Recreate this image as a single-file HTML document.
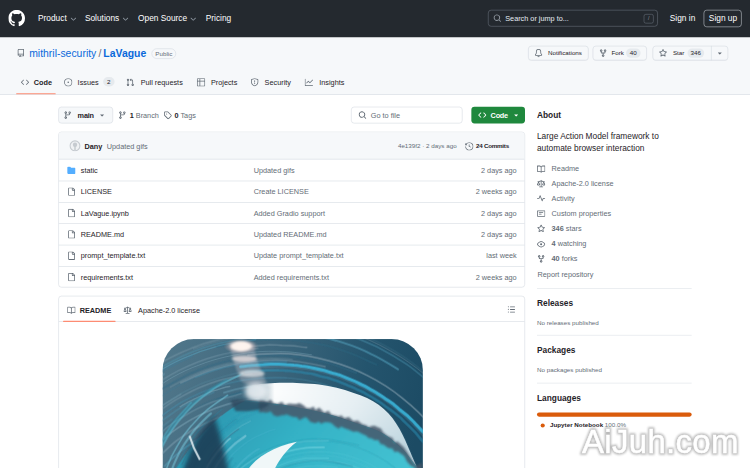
<!DOCTYPE html>
<html><head><meta charset="utf-8">
<style>
*{box-sizing:border-box;margin:0;padding:0}
html,body{width:750px;height:468px;overflow:hidden;background:#fff}
body{font-family:"Liberation Sans",sans-serif;color:#1f2328}
#stage{position:absolute;left:0;top:0;width:1440px;height:899px;transform:scale(0.5208333);transform-origin:0 0;overflow:hidden;background:#fff}
.a{position:absolute;white-space:nowrap}
svg{display:block}
#hdr{position:absolute;left:0;top:0;width:1440px;height:71.5px;background:#24292f}
.nav{top:24px;font-size:16px;color:#fff;line-height:22px}
#rh{position:absolute;left:0;top:71.5px;width:1440px;height:110.5px;background:#f6f8fa;border-bottom:1px solid #d0d7de}
.btn{position:absolute;height:28px;border:1px solid #d0d7de;border-radius:6px;background:#f6f8fa;box-shadow:0 1px 0 rgba(31,35,40,.04)}
.bt{top:21.5px;font-size:12px;line-height:18px;color:#1f2328}
.cnt{position:absolute;top:21.5px;height:18px;border-radius:9px;background:#e6eaee;font-size:12px;font-weight:normal;line-height:18px;text-align:center;color:#1f2328}
.tab{top:147.5px;font-size:14px;line-height:21px;color:#1f2328}
.t14{font-size:14px;line-height:20px;color:#1f2328}
.h2{position:absolute;left:1031px;font-size:16px;font-weight:bold;line-height:24px;color:#1f2328}
.div{position:absolute;left:1031px;width:297px;height:1px;background:#d8dee4}
#wm,#wm2{position:absolute;left:582px;top:423px;font-size:33px;letter-spacing:0.3px;line-height:38px;font-family:"Liberation Sans",sans-serif;white-space:nowrap}
#wm{color:#bbb;-webkit-text-stroke:3.4px #bbb;filter:blur(1.1px)}
#wm2{color:#fff;-webkit-text-stroke:0.5px #fff}
</style></head><body>
<div id="stage">
<div id="hdr">
<svg class="a" style="left:16px;top:19px" width="32" height="32" viewBox="0 0 16 16"><path fill="#fff" d="M8 0c4.42 0 8 3.58 8 8a8.013 8.013 0 0 1-5.45 7.59c-.4.08-.55-.17-.55-.38 0-.27.01-1.130.01-2.2 0-.75-.25-1.23-.54-1.48 1.78-.2 3.65-.88 3.65-3.95 0-.88-.31-1.59-.82-2.15.08-.2.36-1.02-.08-2.12 0 0-.67-.22-2.2.82-.64-.18-1.32-.27-2-.27-.68 0-1.36.09-2 .27-1.53-1.03-2.2-.82-2.2-.82-.44 1.1-.16 1.92-.08 2.12-.51.56-.82 1.28-.82 2.15 0 3.06 1.86 3.75 3.64 3.95-.23.2-.44.55-.51 1.07-.46.21-1.61.55-2.33-.66-.15-.24-.6-.83-1.230-.82-.67.01-.27.38.01.53.34.19.73.9.82 1.13.16.45.68 1.31 2.69.94 0 .67.01 1.3.01 1.49 0 .21-.15.45-.55.38A7.995 7.995 0 0 1 0 8c0-4.42 3.58-8 8-8Z"/></svg>
<div class="a nav" style="left:73px">Product</div>
<div class="a nav" style="left:163px">Solutions</div>
<div class="a nav" style="left:265px">Open Source</div>
<div class="a nav" style="left:395px">Pricing</div>
<svg class="a" style="left:133px;top:29px" width="16" height="16" viewBox="0 0 16 16"><path fill="#8c959f" d="M12.78 5.22a.749.749 0 0 1 0 1.06l-4.25 4.25a.749.749 0 0 1-1.06 0L3.22 6.28a.749.749 0 1 1 1.06-1.06L8 8.939l3.72-3.719a.749.749 0 0 1 1.06 0Z"/></svg>
<svg class="a" style="left:233px;top:29px" width="16" height="16" viewBox="0 0 16 16"><path fill="#8c959f" d="M12.78 5.22a.749.749 0 0 1 0 1.06l-4.25 4.25a.749.749 0 0 1-1.06 0L3.22 6.28a.749.749 0 1 1 1.06-1.06L8 8.939l3.72-3.719a.749.749 0 0 1 1.06 0Z"/></svg>
<svg class="a" style="left:363px;top:29px" width="16" height="16" viewBox="0 0 16 16"><path fill="#8c959f" d="M12.78 5.22a.749.749 0 0 1 0 1.06l-4.25 4.25a.749.749 0 0 1-1.06 0L3.22 6.28a.749.749 0 1 1 1.06-1.06L8 8.939l3.72-3.719a.749.749 0 0 1 1.06 0Z"/></svg>
<div class="a" style="left:937px;top:19px;width:326px;height:32px;border:1px solid #6e7681;border-radius:6px"></div>
<svg class="a" style="left:947px;top:27px" width="16" height="16" viewBox="0 0 16 16"><path fill="#9198a1" d="M10.68 11.74a6 6 0 0 1-7.922-8.982 6 6 0 0 1 8.982 7.922l3.04 3.04a.749.749 0 0 1-.326 1.275.749.749 0 0 1-.734-.215ZM11.5 7a4.499 4.499 0 1 0-8.997 0A4.499 4.499 0 0 0 11.5 7Z"/></svg>
<div class="a nav" style="left:970px;top:25px;font-size:14px;line-height:20px;color:#e6edf3">Search or jump to...</div>
<div class="a" style="left:1236px;top:27px;width:19px;height:18px;border:1px solid #6e7681;border-radius:4px;font-size:10px;line-height:16px;text-align:center;color:#9198a1">/</div>
<div class="a nav" style="left:1286px">Sign in</div>
<div class="a" style="left:1351px;top:19px;width:73px;height:33px;border:1px solid #d0d7de;border-radius:6px"></div>
<div class="a nav" style="left:1361px">Sign up</div>
</div>
<div id="rh">
<svg class="a" style="left:32px;top:22.5px" width="16" height="16" viewBox="0 0 16 16"><path fill="#636c76" d="M2 2.5A2.5 2.5 0 0 1 4.5 0h8.75a.75.75 0 0 1 .75.75v12.5a.75.75 0 0 1-.75.75h-2.5a.75.75 0 0 1 0-1.5h1.75v-2h-8a1 1 0 0 0-.714 1.7.75.75 0 1 1-1.072 1.05A2.495 2.495 0 0 1 2 11.5Zm10.5-1h-8a1 1 0 0 0-1 1v6.708A2.486 2.486 0 0 1 4.5 9h8ZM5 12.25a.25.25 0 0 1 .25-.25h3.5a.25.25 0 0 1 .25.25v3.25a.25.25 0 0 1-.4.2l-1.45-1.087a.249.249 0 0 0-.3 0L5.4 15.7a.25.25 0 0 1-.4-.2Z"/></svg>
<div class="a" style="left:56px;top:16.5px;font-size:20px;line-height:30px;color:#0969da">mithril-security<span style="color:#636c76;margin:0 4px">/</span><b>LaVague</b></div>
<div class="a" style="left:291px;top:21.5px;width:47px;height:20px;border:1px solid #d0d7de;border-radius:10px;font-size:12px;line-height:18px;text-align:center;color:#636c76">Public</div>
<div class="btn" style="left:1014px;top:16.5px;width:116px"></div>
<svg class="a" style="left:1026px;top:22.5px" width="16" height="16" viewBox="0 0 16 16"><path fill="#636c76" d="M8 16a2 2 0 0 0 1.985-1.75c.017-.137-.097-.25-.235-.25h-3.5c-.138 0-.252.113-.235.25A2 2 0 0 0 8 16ZM3 5a5 5 0 0 1 10 0v2.947c0 .05.015.098.042.139l1.703 2.555A1.519 1.519 0 0 1 13.482 13H2.518a1.516 1.516 0 0 1-1.263-2.36l1.703-2.554A.255.255 0 0 0 3 7.947Zm5-3.5A3.5 3.5 0 0 0 4.5 5v2.947c0 .346-.102.683-.294.97l-1.703 2.556a.017.017 0 0 0-.003.01l.001.006c0 .002.002.004.004.006l.006.004.007.001h10.964l.007-.001.006-.004.004-.006.001-.007a.017.017 0 0 0-.003-.01l-1.703-2.554a1.745 1.745 0 0 1-.294-.97V5A3.5 3.5 0 0 0 8 1.5Z"/></svg>
<div class="a bt" style="left:1052px">Notifications</div>
<div class="btn" style="left:1138px;top:16.5px;width:104px"></div>
<svg class="a" style="left:1150px;top:22.5px" width="16" height="16" viewBox="0 0 16 16"><path fill="#636c76" d="M5 5.372v.878c0 .414.336.75.75.75h4.5a.75.75 0 0 0 .75-.75v-.878a2.25 2.25 0 1 1 1.5 0v.878a2.25 2.25 0 0 1-2.25 2.250h-1.5v2.128a2.251 2.251 0 1 1-1.5 0V8.5h-1.5A2.25 2.25 0 0 1 3.5 6.25v-.878a2.25 2.25 0 1 1 1.5 0ZM5 3.25a.75.75 0 1 0-1.5 0 .75.75 0 0 0 1.5 0Zm6.75.75a.75.75 0 1 0 0-1.5.75.75 0 0 0 0 1.5Zm-3 8.75a.75.75 0 1 0-1.5 0 .75.75 0 0 0 1.5 0Z"/></svg>
<div class="a bt" style="left:1174px">Fork</div>
<div class="cnt" style="left:1202px;width:28px">40</div>
<div class="btn" style="left:1253px;top:16.5px;width:145px"></div>
<div class="a" style="left:1365px;top:16.5px;width:1px;height:28px;background:#d0d7de"></div>
<svg class="a" style="left:1265px;top:22.5px" width="16" height="16" viewBox="0 0 16 16"><path fill="#636c76" d="M8 .25a.75.75 0 0 1 .673.418l1.882 3.815 4.21.612a.75.75 0 0 1 .416 1.279l-3.046 2.97.719 4.192a.751.751 0 0 1-1.088.791L8 12.347l-3.766 1.98a.75.75 0 0 1-1.088-.79l.72-4.194L.818 6.374a.75.75 0 0 1 .416-1.28l4.21-.611L7.327.668A.75.75 0 0 1 8 .25Zm0 2.445L6.615 5.5a.75.75 0 0 1-.564.41l-3.097.45 2.240 2.184a.75.75 0 0 1 .216.664l-.528 3.084 2.769-1.456a.75.75 0 0 1 .698 0l2.77 1.456-.53-3.084a.75.75 0 0 1 .216-.664l2.24-2.183-3.096-.45a.75.75 0 0 1-.564-.41L8 2.694Z"/></svg>
<div class="a bt" style="left:1292px">Star</div>
<div class="cnt" style="left:1320px;width:32px">346</div>
<svg class="a" style="left:1374px;top:22.5px" width="16" height="16" viewBox="0 0 16 16"><path fill="#636c76" d="m4.427 7.427 3.396 3.396a.25.25 0 0 0 .354 0l3.396-3.396A.25.25 0 0 0 11.396 7H4.604a.25.25 0 0 0-.177.427Z"/></svg>
</div>
<svg class="a" style="left:40px;top:150px" width="16" height="16" viewBox="0 0 16 16"><path fill="#636c76" d="m11.28 3.22 4.25 4.25a.75.75 0 0 1 0 1.06l-4.25 4.25a.749.749 0 0 1-1.275-.326.749.749 0 0 1 .215-.734L13.94 8l-3.72-3.72a.749.749 0 0 1 .326-1.275.749.749 0 0 1 .734.215Zm-6.56 0a.751.751 0 0 1 1.042.018.751.751 0 0 1 .018 1.042L2.06 8l3.72 3.72a.749.749 0 0 1-.326 1.275.749.749 0 0 1-.734-.215L.47 8.53a.75.75 0 0 1 0-1.06Z"/></svg>
<div class="a tab" style="left:65px;font-weight:bold">Code</div>
<div class="a" style="left:31px;top:179px;width:76px;height:2px;background:#fd8c73;border-radius:2px"></div>
<svg class="a" style="left:123px;top:150px" width="16" height="16" viewBox="0 0 16 16"><path fill="#636c76" d="M8 9.5a1.5 1.5 0 1 0 0-3 1.5 1.5 0 0 0 0 3ZM8 0a8 8 0 1 1 0 16A8 8 0 0 1 8 0ZM1.5 8a6.5 6.5 0 1 0 13 0 6.5 6.5 0 0 0-13 0Z"/></svg>
<div class="a tab" style="left:149px">Issues</div>
<div class="a cnt" style="left:198px;top:148px;width:22px;height:18px">2</div>
<svg class="a" style="left:242px;top:150px" width="16" height="16" viewBox="0 0 16 16"><path fill="#636c76" d="M1.5 3.25a2.25 2.25 0 1 1 3 2.122v5.256a2.251 2.251 0 1 1-1.5 0V5.372A2.25 2.25 0 0 1 1.5 3.25Zm5.677-.177L9.573.677A.25.25 0 0 1 10 .854V2.5h1A2.5 2.5 0 0 1 13.5 5v5.628a2.251 2.251 0 1 1-1.5 0V5a1 1 0 0 0-1-1h-1v1.646a.25.25 0 0 1-.427.177L7.177 3.427a.25.25 0 0 1 0-.354ZM3.75 2.5a.75.75 0 1 0 0 1.5.75.75 0 0 0 0-1.5Zm0 9.5a.75.75 0 1 0 0 1.5.75.75 0 0 0 0-1.5Zm8.25.75a.75.75 0 1 0 1.5 0 .75.75 0 0 0-1.5 0Z"/></svg>
<div class="a tab" style="left:270px">Pull requests</div>
<svg class="a" style="left:378px;top:150px" width="16" height="16" viewBox="0 0 16 16"><path fill="#636c76" d="M0 1.75C0 .784.784 0 1.75 0h12.5C15.216 0 16 .784 16 1.75v12.5A1.75 1.75 0 0 1 14.25 16H1.75A1.75 1.75 0 0 1 0 14.25ZM6.5 6.5v8h7.75a.25.25 0 0 0 .25-.25V6.5Zm8-1.5V1.75a.25.25 0 0 0-.25-.25H6.5V5Zm-13 1.5v7.75c0 .138.112.25.25.25H5v-8ZM5 5V1.5H1.75a.25.25 0 0 0-.25.25V5Z"/></svg>
<div class="a tab" style="left:405px">Projects</div>
<svg class="a" style="left:481px;top:150px" width="16" height="16" viewBox="0 0 16 16"><path fill="#636c76" d="M7.467.133a1.748 1.748 0 0 1 1.066 0l5.25 1.68A1.75 1.75 0 0 1 15 3.48V7c0 1.566-.32 3.182-1.303 4.682-.983 1.498-2.585 2.813-5.032 3.855a1.697 1.697 0 0 1-1.33 0c-2.447-1.042-4.049-2.357-5.032-3.855C1.32 10.182 1 8.566 1 7V3.48a1.755 1.755 0 0 1 1.217-1.667Zm.61 1.429a.25.25 0 0 0-.153 0l-5.25 1.68a.25.25 0 0 0-.174.238V7c0 1.358.275 2.666 1.057 3.86.784 1.194 2.121 2.34 4.366 3.297a.196.196 0 0 0 .154 0c2.245-.956 3.582-2.104 4.366-3.298C13.225 9.666 13.5 8.36 13.5 7V3.48a.251.251 0 0 0-.174-.237l-5.25-1.68ZM8.75 4.75v3a.75.75 0 0 1-1.5 0v-3a.75.75 0 0 1 1.5 0ZM9 10.5a1 1 0 1 1-2 0 1 1 0 0 1 2 0Z"/></svg>
<div class="a tab" style="left:508px">Security</div>
<svg class="a" style="left:585px;top:150px" width="16" height="16" viewBox="0 0 16 16"><path fill="#636c76" d="M1.5 1.75V13.5h13.75a.75.75 0 0 1 0 1.5H.75a.75.75 0 0 1-.75-.75V1.75a.75.75 0 0 1 1.5 0Zm14.28 2.53-5.25 5.25a.75.75 0 0 1-1.06 0L7 7.06 4.28 9.78a.751.751 0 0 1-1.042-.018.751.751 0 0 1-.018-1.042l3.25-3.25a.75.75 0 0 1 1.06 0L10 7.94l4.72-4.72a.751.751 0 0 1 1.042.018.751.751 0 0 1 .018 1.042Z"/></svg>
<div class="a tab" style="left:613px">Insights</div>
<div class="a" style="left:112px;top:205px;width:105px;height:32px;border:1px solid #d0d7de;border-radius:6px;background:#f6f8fa"></div>
<svg class="a" style="left:122px;top:213px" width="16" height="16" viewBox="0 0 16 16"><path fill="#636c76" d="M9.5 3.25a2.25 2.25 0 1 1 3 2.122V6A2.5 2.5 0 0 1 10 8.5H6a1 1 0 0 0-1 1v1.128a2.251 2.251 0 1 1-1.5 0V5.372a2.25 2.25 0 1 1 1.5 0v1.836A2.493 2.493 0 0 1 6 7h4a1 1 0 0 0 1-1v-.628A2.25 2.25 0 0 1 9.5 3.25Zm-6 0a.75.75 0 1 0 1.5 0 .75.75 0 0 0-1.5 0Zm8.25-.75a.75.75 0 1 0 0 1.5.75.75 0 0 0 0-1.5ZM4.25 12a.75.75 0 1 0 0 1.5.75.75 0 0 0 0-1.5Z"/></svg>
<div class="a t14" style="left:149px;top:211px;font-weight:bold;letter-spacing:-0.4px">main</div>
<svg class="a" style="left:188px;top:213px" width="16" height="16" viewBox="0 0 16 16"><path fill="#636c76" d="m4.427 7.427 3.396 3.396a.25.25 0 0 0 .354 0l3.396-3.396A.25.25 0 0 0 11.396 7H4.604a.25.25 0 0 0-.177.427Z"/></svg>
<svg class="a" style="left:227px;top:213px" width="16" height="16" viewBox="0 0 16 16"><path fill="#636c76" d="M9.5 3.25a2.25 2.25 0 1 1 3 2.122V6A2.5 2.5 0 0 1 10 8.5H6a1 1 0 0 0-1 1v1.128a2.251 2.251 0 1 1-1.5 0V5.372a2.25 2.25 0 1 1 1.5 0v1.836A2.493 2.493 0 0 1 6 7h4a1 1 0 0 0 1-1v-.628A2.25 2.25 0 0 1 9.5 3.25Zm-6 0a.75.75 0 1 0 1.5 0 .75.75 0 0 0-1.5 0Zm8.25-.75a.75.75 0 1 0 0 1.5.75.75 0 0 0 0-1.5ZM4.25 12a.75.75 0 1 0 0 1.5.75.75 0 0 0 0-1.5Z"/></svg>
<div class="a t14" style="left:249px;top:211px"><b>1</b> <span style="color:#636c76">Branch</span></div>
<svg class="a" style="left:314px;top:213px" width="16" height="16" viewBox="0 0 16 16"><path fill="#636c76" d="M1 7.775V2.75C1 1.784 1.784 1 2.75 1h5.025c.464 0 .91.184 1.238.513l6.25 6.25a1.75 1.75 0 0 1 0 2.474l-5.026 5.026a1.75 1.75 0 0 1-2.474 0l-6.25-6.25A1.752 1.752 0 0 1 1 7.775Zm1.5 0c0 .066.026.13.073.177l6.25 6.25a.25.25 0 0 0 .354 0l5.025-5.025a.25.25 0 0 0 0-.354l-6.25-6.25a.25.25 0 0 0-.177-.073H2.75a.25.25 0 0 0-.25.25ZM6 5a1 1 0 1 1 0 2 1 1 0 0 1 0-2Z"/></svg>
<div class="a t14" style="left:335px;top:211px"><b>0</b> <span style="color:#636c76">Tags</span></div>
<div class="a" style="left:674px;top:205px;width:214px;height:32px;border:1px solid #d0d7de;border-radius:6px;background:#fff"></div>
<svg class="a" style="left:688px;top:213px" width="16" height="16" viewBox="0 0 16 16"><path fill="#636c76" d="M10.68 11.74a6 6 0 0 1-7.922-8.982 6 6 0 0 1 8.982 7.922l3.04 3.04a.749.749 0 0 1-.326 1.275.749.749 0 0 1-.734-.215ZM11.5 7a4.499 4.499 0 1 0-8.997 0A4.499 4.499 0 0 0 11.5 7Z"/></svg>
<div class="a t14" style="left:712px;top:211px;color:#636c76">Go to file</div>
<div class="a" style="left:905px;top:205px;width:103px;height:32px;border-radius:6px;background:#1f883d"></div>
<svg class="a" style="left:918px;top:213px" width="16" height="16" viewBox="0 0 16 16"><path fill="#fff" d="m11.28 3.22 4.25 4.25a.75.75 0 0 1 0 1.06l-4.25 4.25a.749.749 0 0 1-1.275-.326.749.749 0 0 1 .215-.734L13.94 8l-3.72-3.72a.749.749 0 0 1 .326-1.275.749.749 0 0 1 .734.215Zm-6.56 0a.751.751 0 0 1 1.042.018.751.751 0 0 1 .018 1.042L2.06 8l3.72 3.72a.749.749 0 0 1-.326 1.275.749.749 0 0 1-.734-.215L.47 8.53a.75.75 0 0 1 0-1.06Z"/></svg>
<div class="a t14" style="left:942px;top:211px;font-weight:bold;letter-spacing:-0.5px;color:#fff">Code</div>
<svg class="a" style="left:983px;top:213px" width="16" height="16" viewBox="0 0 16 16"><path fill="#fff" d="m4.427 7.427 3.396 3.396a.25.25 0 0 0 .354 0l3.396-3.396A.25.25 0 0 0 11.396 7H4.604a.25.25 0 0 0-.177.427Z"/></svg>
<div class="a" style="left:112px;top:253px;width:896px;height:299px;border:1px solid #d0d7de;border-radius:6px;overflow:hidden"><div class="a" style="left:0;top:0;width:894px;height:52px;background:#f6f8fa;border-bottom:1px solid #d0d7de"></div></div>
<svg class="a" style="left:133px;top:269px" width="22" height="22" viewBox="0 0 22 22"><circle cx="11" cy="11" r="9.5" fill="#f0f2f4" stroke="#c6cbd0" stroke-width="2.2"/><circle cx="11" cy="9" r="4.2" fill="#c6cbd0"/><rect x="9.6" y="11" width="2.8" height="8.5" fill="#c6cbd0"/></svg>
<div class="a t14" style="left:162px;top:271px;font-weight:bold">Dany</div>
<div class="a t14" style="left:205px;top:271px;color:#636c76">Updated gifs</div>
<div class="a" style="left:764px;top:272px;font-size:12px;line-height:18px;color:#636c76">4e139f2 · 2 days ago</div>
<svg class="a" style="left:893px;top:273px" width="16" height="16" viewBox="0 0 16 16"><path fill="#636c76" d="m.427 1.927 1.215 1.215a8.002 8.002 0 1 1-1.6 5.685.75.75 0 1 1 1.493-.154 6.5 6.5 0 1 0 1.18-4.458l1.358 1.358A.25.25 0 0 1 3.896 6H.25A.25.25 0 0 1 0 5.75V2.104a.25.25 0 0 1 .427-.177ZM7.75 4a.75.75 0 0 1 .75.75v2.992l2.028.812a.75.75 0 0 1-.557 1.392l-2.5-1A.751.751 0 0 1 7 8.25v-3.5A.75.75 0 0 1 7.75 4Z"/></svg>
<div class="a" style="left:914px;top:272px;font-size:12px;line-height:18px;font-weight:bold;letter-spacing:-0.5px">24 Commits</div>
<svg class="a" style="left:129px;top:319px" width="16" height="16" viewBox="0 0 16 16"><path fill="#54aeff" d="M1.75 1A1.75 1.75 0 0 0 0 2.75v10.5C0 14.216.784 15 1.75 15h12.5A1.75 1.75 0 0 0 16 13.25v-8.5A1.75 1.75 0 0 0 14.25 3H7.5a.25.25 0 0 1-.2-.1l-.9-1.2C6.07 1.26 5.55 1 5 1H1.75Z"/></svg>
<div class="a t14" style="left:155px;top:317px">static</div>
<div class="a t14" style="left:487px;top:317px;color:#636c76">Updated gifs</div>
<div class="a t14" style="right:448px;top:317px;color:#636c76">2 days ago</div>
<div class="a" style="left:113px;top:347px;width:894px;height:1px;background:#d0d7de"></div>
<svg class="a" style="left:129px;top:360px" width="16" height="16" viewBox="0 0 16 16"><path fill="#636c76" d="M2 1.75C2 .784 2.784 0 3.75 0h6.586c.464 0 .909.184 1.237.513l2.914 2.914c.329.328.513.773.513 1.237v9.586A1.75 1.75 0 0 1 13.25 16h-9.5A1.75 1.75 0 0 1 2 14.25Zm1.75-.25a.25.25 0 0 0-.25.25v12.5c0 .138.112.25.25.25h9.5a.25.25 0 0 0 .25-.25V6h-2.75A1.75 1.75 0 0 1 9 4.25V1.5Zm6.75.062V4.25c0 .138.112.25.25.25h2.688l-.011-.013-2.914-2.914-.013-.011Z"/></svg>
<div class="a t14" style="left:155px;top:358px">LICENSE</div>
<div class="a t14" style="left:487px;top:358px;color:#636c76">Create LICENSE</div>
<div class="a t14" style="right:448px;top:358px;color:#636c76">2 weeks ago</div>
<div class="a" style="left:113px;top:388px;width:894px;height:1px;background:#d0d7de"></div>
<svg class="a" style="left:129px;top:401px" width="16" height="16" viewBox="0 0 16 16"><path fill="#636c76" d="M2 1.75C2 .784 2.784 0 3.75 0h6.586c.464 0 .909.184 1.237.513l2.914 2.914c.329.328.513.773.513 1.237v9.586A1.75 1.75 0 0 1 13.25 16h-9.5A1.75 1.75 0 0 1 2 14.25Zm1.75-.25a.25.25 0 0 0-.25.25v12.5c0 .138.112.25.25.25h9.5a.25.25 0 0 0 .25-.25V6h-2.75A1.75 1.75 0 0 1 9 4.25V1.5Zm6.75.062V4.25c0 .138.112.25.25.25h2.688l-.011-.013-2.914-2.914-.013-.011Z"/></svg>
<div class="a t14" style="left:155px;top:399px">LaVague.ipynb</div>
<div class="a t14" style="left:487px;top:399px;color:#636c76">Added Gradio support</div>
<div class="a t14" style="right:448px;top:399px;color:#636c76">2 days ago</div>
<div class="a" style="left:113px;top:429px;width:894px;height:1px;background:#d0d7de"></div>
<svg class="a" style="left:129px;top:442px" width="16" height="16" viewBox="0 0 16 16"><path fill="#636c76" d="M2 1.75C2 .784 2.784 0 3.75 0h6.586c.464 0 .909.184 1.237.513l2.914 2.914c.329.328.513.773.513 1.237v9.586A1.75 1.75 0 0 1 13.25 16h-9.5A1.75 1.75 0 0 1 2 14.25Zm1.75-.25a.25.25 0 0 0-.25.25v12.5c0 .138.112.25.25.25h9.5a.25.25 0 0 0 .25-.25V6h-2.75A1.75 1.75 0 0 1 9 4.25V1.5Zm6.75.062V4.25c0 .138.112.25.25.25h2.688l-.011-.013-2.914-2.914-.013-.011Z"/></svg>
<div class="a t14" style="left:155px;top:440px">README.md</div>
<div class="a t14" style="left:487px;top:440px;color:#636c76">Updated README.md</div>
<div class="a t14" style="right:448px;top:440px;color:#636c76">2 days ago</div>
<div class="a" style="left:113px;top:470px;width:894px;height:1px;background:#d0d7de"></div>
<svg class="a" style="left:129px;top:483px" width="16" height="16" viewBox="0 0 16 16"><path fill="#636c76" d="M2 1.75C2 .784 2.784 0 3.75 0h6.586c.464 0 .909.184 1.237.513l2.914 2.914c.329.328.513.773.513 1.237v9.586A1.75 1.75 0 0 1 13.25 16h-9.5A1.75 1.75 0 0 1 2 14.25Zm1.75-.25a.25.25 0 0 0-.25.25v12.5c0 .138.112.25.25.25h9.5a.25.25 0 0 0 .25-.25V6h-2.75A1.75 1.75 0 0 1 9 4.25V1.5Zm6.75.062V4.25c0 .138.112.25.25.25h2.688l-.011-.013-2.914-2.914-.013-.011Z"/></svg>
<div class="a t14" style="left:155px;top:481px">prompt_template.txt</div>
<div class="a t14" style="left:487px;top:481px;color:#636c76">Update prompt_template.txt</div>
<div class="a t14" style="right:448px;top:481px;color:#636c76">last week</div>
<div class="a" style="left:113px;top:511px;width:894px;height:1px;background:#d0d7de"></div>
<svg class="a" style="left:129px;top:524px" width="16" height="16" viewBox="0 0 16 16"><path fill="#636c76" d="M2 1.75C2 .784 2.784 0 3.75 0h6.586c.464 0 .909.184 1.237.513l2.914 2.914c.329.328.513.773.513 1.237v9.586A1.75 1.75 0 0 1 13.25 16h-9.5A1.75 1.75 0 0 1 2 14.25Zm1.75-.25a.25.25 0 0 0-.25.25v12.5c0 .138.112.25.25.25h9.5a.25.25 0 0 0 .25-.25V6h-2.75A1.75 1.75 0 0 1 9 4.25V1.5Zm6.75.062V4.25c0 .138.112.25.25.25h2.688l-.011-.013-2.914-2.914-.013-.011Z"/></svg>
<div class="a t14" style="left:155px;top:522px">requirements.txt</div>
<div class="a t14" style="left:487px;top:522px;color:#636c76">Added requirements.txt</div>
<div class="a t14" style="right:448px;top:522px;color:#636c76">2 weeks ago</div>
<div class="a" style="left:112px;top:568px;width:896px;height:400px;border:1px solid #d0d7de;border-radius:6px"></div>
<div class="a" style="left:113px;top:617px;width:894px;height:1px;background:#d0d7de"></div>
<svg class="a" style="left:129px;top:588px" width="16" height="16" viewBox="0 0 16 16"><path fill="#636c76" d="M0 1.75A.75.75 0 0 1 .75 1h4.253c1.227 0 2.317.59 3 1.501A3.743 3.743 0 0 1 11.006 1h4.245a.75.75 0 0 1 .75.75v10.5a.75.75 0 0 1-.75.75h-4.507a2.25 2.25 0 0 0-1.591.659l-.622.621a.75.75 0 0 1-1.060 0l-.622-.621A2.25 2.25 0 0 0 5.258 13H.75a.75.75 0 0 1-.75-.75Zm7.251 10.324.004-5.073-.002-2.253A2.25 2.25 0 0 0 5.003 2.5H1.5v9h3.757a3.75 3.75 0 0 1 1.994.574ZM8.755 4.75l-.004 7.322a3.752 3.752 0 0 1 1.992-.572H14.5v-9h-3.495a2.25 2.25 0 0 0-2.25 2.25Z"/></svg>
<div class="a t14" style="left:153px;top:586px;font-weight:bold">README</div>
<div class="a" style="left:121px;top:615.5px;width:101px;height:2px;background:#fd8c73;border-radius:2px"></div>
<svg class="a" style="left:237px;top:588px" width="16" height="16" viewBox="0 0 16 16"><path fill="#636c76" d="M8.75.75V2h.985c.304 0 .603.08.867.231l1.29.736c.038.022.08.033.124.033h2.234a.75.75 0 0 1 0 1.5h-.427l2.111 4.692a.75.75 0 0 1-.154.838l-.53-.53.529.531-.001.002-.002.002-.006.006-.006.005-.01.01-.045.04c-.21.176-.441.327-.686.45C14.556 10.78 13.88 11 13 11a4.498 4.498 0 0 1-2.023-.454 3.544 3.544 0 0 1-.686-.45l-.045-.04-.016-.015-.006-.006-.004-.004v-.001a.75.75 0 0 1-.154-.838L12.178 4.5h-.162c-.305 0-.604-.079-.868-.231l-1.29-.736a.245.245 0 0 0-.124-.033H8.75V13h2.5a.75.75 0 0 1 0 1.5h-6.5a.75.75 0 0 1 0-1.5h2.5V3.5h-.984a.245.245 0 0 0-.124.033l-1.289.737c-.265.15-.564.23-.869.23h-.162l2.112 4.692a.75.75 0 0 1-.154.838l-.53-.53.529.531-.001.002-.002.002-.006.006-.016.015-.045.04c-.21.176-.441.327-.686.45C4.556 10.78 3.88 11 3 11a4.498 4.498 0 0 1-2.023-.454 3.544 3.544 0 0 1-.686-.45l-.045-.04-.016-.015-.006-.006-.004-.004v-.001a.75.75 0 0 1-.154-.838L2.178 4.5H1.75a.75.75 0 0 1 0-1.5h2.234a.249.249 0 0 0 .125-.033l1.288-.737c.265-.15.564-.23.869-.23h.984V.75a.75.75 0 0 1 1.5 0Zm2.945 8.477c.285.135.718.273 1.305.273s1.020-.138 1.305-.273L13 6.327Zm-10 0c.285.135.718.273 1.305.273s1.02-.138 1.305-.273L3 6.327Z"/></svg>
<div class="a t14" style="left:265px;top:586px">Apache-2.0 license</div>
<svg class="a" style="left:974px;top:586px" width="16" height="16" viewBox="0 0 16 16"><path fill="#636c76" d="M5.75 2.5h8.5a.75.75 0 0 1 0 1.5h-8.5a.75.75 0 0 1 0-1.5Zm0 5h8.5a.75.75 0 0 1 0 1.5h-8.5a.75.75 0 0 1 0-1.5Zm0 5h8.5a.75.75 0 0 1 0 1.5h-8.5a.75.75 0 0 1 0-1.5ZM2 14a1 1 0 1 1 0-2 1 1 0 0 1 0 2Zm1-6a1 1 0 1 1-2 0 1 1 0 0 1 2 0ZM2 4a1 1 0 1 1 0-2 1 1 0 0 1 0 2Z"/></svg>
<svg class="a" style="left:312px;top:651px" width="500" height="500" viewBox="0 0 500 500">
<defs>
<clipPath id="wc"><rect x="0" y="0" width="500" height="500" rx="60" ry="60"/></clipPath>
<linearGradient id="wbg" x1="0" y1="0" x2="1" y2="0.3">
<stop offset="0" stop-color="#52788b"/><stop offset="0.4" stop-color="#3e677d"/><stop offset="0.75" stop-color="#24546d"/><stop offset="1" stop-color="#1c4b64"/>
</linearGradient>
<radialGradient id="wsky" cx="0.1" cy="0.1" r="1.1">
<stop offset="0" stop-color="#ffffff"/><stop offset="0.5" stop-color="#e6eff3"/><stop offset="1" stop-color="#bcd4de"/>
</radialGradient>
<linearGradient id="wwat" x1="0" y1="0" x2="1" y2="0.6">
<stop offset="0" stop-color="#2a88a4"/><stop offset="0.45" stop-color="#34b2c6"/><stop offset="1" stop-color="#4ccbd9"/>
</linearGradient>
<radialGradient id="wgl" cx="0.5" cy="0.5" r="0.5">
<stop offset="0" stop-color="#fffaf6"/><stop offset="0.4" stop-color="#f2dcd6" stop-opacity="0.95"/><stop offset="1" stop-color="#9a8e98" stop-opacity="0"/>
</radialGradient>
<linearGradient id="wskm" gradientUnits="userSpaceOnUse" x1="160" y1="0" x2="215" y2="0"><stop offset="0" stop-color="#fff" stop-opacity="0"/><stop offset="1" stop-color="#fff" stop-opacity="1"/></linearGradient>
<mask id="wskmask"><rect x="0" y="0" width="500" height="500" fill="url(#wskm)"/></mask>
<filter id="wb1" x="-20%" y="-20%" width="140%" height="140%"><feGaussianBlur stdDeviation="5"/></filter>
<filter id="wb2" x="-20%" y="-20%" width="140%" height="140%"><feGaussianBlur stdDeviation="1.5"/></filter>
<filter id="wb3" x="-20%" y="-20%" width="140%" height="140%"><feGaussianBlur stdDeviation="2.5"/></filter>
</defs>
<g clip-path="url(#wc)">
<rect width="500" height="500" fill="url(#wbg)"/>
<g filter="url(#wb2)" fill="none" stroke-linecap="round">
<path d="M-118 176 C-115 173 -107 162 -101 155 C-95 148 -89 141 -83 135 C-76 128 -70 122 -63 116 C-56 110 -49 104 -42 98 C-35 93 -28 87 -20 82 C-13 77 -1 70 3 67" stroke="#6ea8be" stroke-width="3.8" opacity="0.34"/>
<path d="M34 130 C36 128 44 124 49 121 C54 119 59 116 64 114 C69 111 75 109 80 107 C85 104 91 102 96 100 C101 99 107 97 112 95 C118 93 126 91 129 91" stroke="#88b0c2" stroke-width="2.7" opacity="0.42"/>
<path d="M-130 420 C-130 417 -129 407 -129 401 C-128 394 -127 388 -126 382 C-125 375 -124 369 -123 363 C-122 357 -120 350 -119 344 C-117 338 -115 332 -113 326 C-111 320 -108 311 -107 308" stroke="#5cb0cc" stroke-width="3.3" opacity="0.47"/>
<path d="M-163 232 C-157 222 -139 190 -125 171 C-111 152 -95 133 -78 117 C-61 100 -42 85 -22 72 C-2 58 19 46 40 37 C62 27 85 19 108 13 C131 7 167 3 179 1" stroke="#5cb0cc" stroke-width="2.4" opacity="0.41"/>
<path d="M-227 317 C-224 309 -218 285 -213 269 C-208 253 -201 238 -194 223 C-187 208 -179 193 -170 179 C-162 165 -152 151 -142 138 C-132 125 -121 112 -109 101 C-98 89 -79 72 -72 67" stroke="#6ea8be" stroke-width="3.7" opacity="0.37"/>
<path d="M-26 103 C-18 98 4 82 20 73 C36 64 53 56 70 50 C87 43 105 38 122 34 C140 30 158 27 177 25 C195 23 213 23 231 24 C249 24 277 29 286 30" stroke="#88b0c2" stroke-width="1.7" opacity="0.39"/>
<path d="M-245 316 C-241 304 -232 268 -223 244 C-214 221 -203 198 -191 177 C-178 155 -164 135 -148 115 C-132 96 -114 78 -96 61 C-77 45 -57 30 -35 17 C-14 3 20 -12 31 -18" stroke="#a8bcc8" stroke-width="3.8" opacity="0.41"/>
<path d="M-40 160 C-34 155 -16 138 -3 129 C10 120 24 111 38 103 C52 96 66 89 81 83 C96 78 112 73 127 69 C143 65 159 62 175 61 C191 59 215 59 223 59" stroke="#6ea8be" stroke-width="2.3" opacity="0.23"/>
<path d="M-74 413 C-73 410 -72 401 -72 395 C-71 389 -69 383 -68 377 C-67 372 -65 366 -64 360 C-62 354 -60 349 -58 343 C-56 338 -54 332 -52 327 C-49 321 -45 313 -44 310" stroke="#3d7f9e" stroke-width="2.1" opacity="0.20"/>
<path d="M-85 269 C-83 265 -76 254 -71 247 C-67 240 -62 233 -57 226 C-51 219 -46 212 -40 206 C-34 199 -28 193 -22 187 C-16 181 -9 175 -3 170 C4 164 14 157 18 154" stroke="#4f98b4" stroke-width="3.4" opacity="0.30"/>
<path d="M-117 100 C-112 95 -99 82 -90 74 C-80 65 -71 57 -61 50 C-51 42 -40 35 -30 29 C-19 22 -8 16 3 10 C14 4 25 -1 37 -6 C48 -11 66 -17 72 -19" stroke="#a8bcc8" stroke-width="3.2" opacity="0.26"/>
<path d="M-133 316 C-128 305 -116 272 -105 252 C-94 232 -81 213 -66 195 C-51 178 -35 161 -17 147 C1 132 20 119 41 108 C61 97 82 88 104 81 C126 74 161 69 172 67" stroke="#9cb8c6" stroke-width="2.5" opacity="0.37"/>
<path d="M118 103 C124 101 145 95 159 93 C173 91 187 90 201 89 C215 88 229 89 243 90 C257 91 271 93 285 96 C299 99 312 103 326 107 C339 112 358 121 365 124" stroke="#6ea8be" stroke-width="3.3" opacity="0.49"/>
<path d="M104 116 C111 114 129 108 142 105 C154 102 167 100 180 99 C193 98 206 97 219 97 C232 97 245 98 258 100 C271 102 283 104 296 107 C309 111 327 117 333 119" stroke="#2f6a86" stroke-width="3.8" opacity="0.45"/>
<path d="M-51 193 C-45 187 -26 167 -12 156 C1 145 16 134 32 125 C47 116 63 108 80 101 C96 94 114 89 131 85 C148 80 166 77 184 76 C202 74 229 76 238 75" stroke="#3d7f9e" stroke-width="2.3" opacity="0.45"/>
<path d="M-63 242 C-58 236 -43 215 -31 203 C-19 190 -7 179 7 168 C20 158 35 148 49 140 C64 132 80 124 96 118 C112 112 128 108 145 104 C162 101 187 99 196 97" stroke="#2f6a86" stroke-width="2.9" opacity="0.29"/>
<path d="M165 -9 C169 -10 183 -11 193 -12 C202 -12 211 -12 221 -12 C230 -12 240 -12 249 -11 C258 -10 268 -9 277 -8 C286 -6 296 -5 305 -3 C314 -1 328 3 332 4" stroke="#3d7f9e" stroke-width="2.0" opacity="0.43"/>
<path d="M-99 318 C-95 309 -85 282 -75 266 C-66 250 -55 234 -42 219 C-30 205 -17 191 -2 179 C12 166 28 155 45 146 C61 136 78 128 96 121 C114 114 142 108 151 105" stroke="#88b0c2" stroke-width="2.6" opacity="0.39"/>
<path d="M-172 297 C-167 285 -153 247 -140 224 C-127 201 -112 179 -95 159 C-77 139 -58 120 -37 104 C-16 87 7 73 30 61 C54 49 79 39 105 32 C130 25 170 20 184 18" stroke="#9cb8c6" stroke-width="2.0" opacity="0.34"/>
<path d="M181 120 C188 119 207 118 219 118 C232 118 244 119 257 121 C269 123 282 125 294 128 C306 132 318 135 330 140 C342 145 353 150 365 156 C376 162 391 173 397 176" stroke="#6ea8be" stroke-width="1.9" opacity="0.28"/>
<path d="M-97 272 C-93 266 -82 247 -74 234 C-66 222 -56 211 -47 200 C-37 189 -26 178 -15 168 C-4 159 8 150 20 142 C32 133 45 126 58 119 C71 113 92 105 99 102" stroke="#4f98b4" stroke-width="2.5" opacity="0.44"/>
<path d="M118 -26 C132 -28 176 -36 205 -37 C234 -37 263 -35 292 -30 C320 -25 349 -17 376 -7 C403 3 429 17 454 32 C478 47 502 65 523 85 C544 105 571 139 580 150" stroke="#a8bcc8" stroke-width="1.8" opacity="0.34"/>
<path d="M-181 358 C-180 351 -176 331 -172 317 C-169 304 -164 291 -159 278 C-154 265 -148 252 -142 240 C-136 227 -129 215 -121 204 C-113 192 -105 181 -96 170 C-88 160 -73 145 -68 139" stroke="#5cb0cc" stroke-width="2.7" opacity="0.40"/>
<path d="M-78 299 C-74 290 -61 265 -50 250 C-40 235 -27 220 -14 207 C-1 194 14 181 29 171 C45 160 61 150 78 143 C95 135 113 128 131 123 C149 119 177 115 186 114" stroke="#88b0c2" stroke-width="2.0" opacity="0.47"/>
<path d="M-251 382 C-250 372 -247 342 -243 322 C-239 303 -234 283 -228 264 C-221 245 -214 226 -205 208 C-196 190 -186 173 -175 156 C-164 139 -151 123 -138 108 C-125 93 -103 72 -96 65" stroke="#5cb0cc" stroke-width="2.2" opacity="0.42"/>
<path d="M4 244 C5 242 10 237 14 234 C17 230 21 227 24 224 C28 221 32 218 35 215 C39 212 43 209 47 206 C51 204 55 201 59 198 C63 196 69 192 71 191" stroke="#5cb0cc" stroke-width="2.9" opacity="0.43"/>
<path d="M166 55 C177 55 209 52 231 53 C252 54 274 57 295 61 C316 66 337 72 357 81 C377 89 396 99 415 110 C433 122 450 135 466 150 C482 164 503 189 510 197" stroke="#88b0c2" stroke-width="2.6" opacity="0.21"/>
<path d="M-125 246 C-118 236 -100 204 -85 185 C-69 167 -52 149 -34 133 C-15 118 5 104 26 92 C47 80 70 70 93 62 C116 55 140 49 164 46 C188 43 225 44 237 43" stroke="#3d7f9e" stroke-width="1.9" opacity="0.35"/>
<path d="M-190 311 C-186 301 -177 270 -168 250 C-160 230 -149 211 -138 193 C-126 175 -113 158 -99 142 C-84 126 -69 111 -52 98 C-36 84 -18 71 1 61 C19 50 49 37 58 32" stroke="#3d7f9e" stroke-width="2.9" opacity="0.41"/>
<path d="M-68 101 C-60 96 -38 77 -23 67 C-7 56 9 47 26 39 C43 30 61 23 78 17 C96 11 115 6 133 3 C151 -1 170 -3 189 -4 C208 -6 236 -4 246 -4" stroke="#4f98b4" stroke-width="2.8" opacity="0.45"/>
<path d="M15 92 C21 89 38 79 51 73 C63 67 75 62 88 58 C101 53 114 50 127 47 C141 44 154 41 167 40 C181 38 194 37 208 37 C221 37 242 38 249 39" stroke="#9cb8c6" stroke-width="2.3" opacity="0.24"/>
<path d="M35 84 C42 81 64 70 78 65 C93 59 108 55 124 51 C139 47 155 44 171 43 C186 41 202 40 218 40 C234 40 250 42 265 44 C281 46 304 51 312 53" stroke="#a8bcc8" stroke-width="2.8" opacity="0.35"/>
<path d="M164 31 C177 30 216 26 242 28 C268 30 295 35 320 42 C345 49 370 58 393 70 C417 82 439 96 460 113 C480 129 500 147 516 167 C533 187 554 221 561 232" stroke="#a8bcc8" stroke-width="2.9" opacity="0.50"/>
<path d="M146 138 C150 137 160 135 167 134 C175 133 182 132 189 131 C196 131 203 130 211 130 C218 130 225 130 232 131 C239 131 247 132 254 133 C261 134 271 136 275 136" stroke="#3d7f9e" stroke-width="2.5" opacity="0.49"/>
<path d="M5 11 C13 7 37 -5 54 -11 C71 -18 89 -23 106 -27 C124 -32 142 -35 160 -37 C178 -39 196 -40 214 -40 C232 -40 250 -39 268 -37 C286 -35 313 -29 322 -27" stroke="#4f98b4" stroke-width="2.3" opacity="0.47"/>
<path d="M-239 346 C-237 337 -232 308 -226 289 C-221 271 -215 252 -207 234 C-199 216 -190 199 -180 182 C-171 165 -159 149 -148 134 C-136 118 -123 104 -109 90 C-95 76 -72 58 -65 52" stroke="#88b0c2" stroke-width="2.0" opacity="0.39"/>
<path d="M90 -24 C103 -26 140 -35 166 -38 C191 -41 217 -41 242 -40 C268 -38 293 -35 318 -29 C343 -23 368 -15 391 -5 C414 5 437 17 459 31 C480 44 510 69 520 77" stroke="#6ea8be" stroke-width="1.6" opacity="0.25"/>
<path d="M77 189 C84 185 104 175 118 170 C133 165 148 161 163 158 C178 156 193 154 208 154 C223 153 239 154 254 156 C269 158 284 162 298 166 C313 171 334 180 341 183" stroke="#9cb8c6" stroke-width="3.0" opacity="0.23"/>
<path d="M104 15 C112 14 138 7 155 5 C173 2 190 1 208 1 C225 0 243 1 260 3 C278 5 295 8 312 12 C329 16 346 22 363 28 C379 34 403 46 411 49" stroke="#2f6a86" stroke-width="3.3" opacity="0.41"/>
<path d="M160 -28 C171 -28 203 -31 225 -31 C246 -30 268 -28 289 -24 C310 -21 332 -16 352 -9 C373 -2 393 6 412 15 C431 25 450 36 468 48 C486 60 510 82 519 89" stroke="#4f98b4" stroke-width="2.8" opacity="0.46"/>
<path d="M63 73 C68 72 82 66 91 63 C101 59 110 57 120 54 C130 52 140 50 149 48 C159 46 169 45 179 44 C189 43 199 43 209 43 C219 42 234 43 239 43" stroke="#4f98b4" stroke-width="2.1" opacity="0.42"/>
<path d="M-214 342 C-213 336 -209 316 -205 303 C-202 289 -197 276 -192 264 C-188 251 -182 238 -176 226 C-170 214 -163 202 -156 190 C-149 179 -141 167 -133 157 C-125 146 -111 130 -107 125" stroke="#5cb0cc" stroke-width="3.7" opacity="0.26"/>
<path d="M59 19 C63 18 75 14 83 11 C91 8 99 6 108 4 C116 2 124 -0 132 -2 C141 -3 149 -5 157 -6 C166 -7 174 -8 183 -8 C191 -9 204 -9 208 -9" stroke="#9cb8c6" stroke-width="1.8" opacity="0.23"/>
<path d="M-20 161 C-11 155 16 133 36 121 C56 110 77 100 99 93 C121 85 143 80 166 77 C189 74 212 73 235 74 C258 76 281 79 304 85 C326 91 358 105 369 109" stroke="#4f98b4" stroke-width="2.0" opacity="0.39"/>
<path d="M117 -3 C126 -4 155 -10 174 -12 C194 -14 213 -14 233 -13 C252 -13 272 -10 291 -7 C310 -4 329 1 347 7 C366 13 384 20 401 29 C419 37 444 53 452 58" stroke="#5cb0cc" stroke-width="3.8" opacity="0.49"/>
<path d="M-10 229 C-4 223 14 205 27 195 C41 185 55 175 70 168 C85 160 100 153 116 148 C132 142 149 138 165 135 C182 133 199 131 215 132 C232 132 257 135 266 136" stroke="#9cb8c6" stroke-width="3.5" opacity="0.34"/>
<path d="M-55 333 C-52 327 -44 308 -37 296 C-30 284 -23 273 -14 262 C-6 251 4 241 13 232 C23 222 34 213 45 205 C56 198 68 190 80 184 C92 178 111 170 117 168" stroke="#3d7f9e" stroke-width="1.9" opacity="0.26"/>
<path d="M-97 350 C-93 340 -84 309 -74 290 C-64 270 -52 252 -39 235 C-25 218 -10 202 7 188 C23 174 41 162 60 152 C79 141 100 133 120 127 C141 120 174 116 184 114" stroke="#88b0c2" stroke-width="2.9" opacity="0.24"/>
<path d="M132 19 C136 19 148 16 156 15 C164 14 172 13 181 13 C189 12 197 12 205 11 C213 11 221 11 229 12 C237 12 245 12 253 13 C261 14 273 16 277 16" stroke="#a8bcc8" stroke-width="2.7" opacity="0.35"/>
<path d="M-84 219 C-83 217 -78 210 -74 206 C-71 202 -67 197 -64 193 C-60 189 -56 185 -53 181 C-49 177 -45 173 -41 169 C-37 165 -33 161 -29 157 C-25 154 -18 148 -16 146" stroke="#6ea8be" stroke-width="3.6" opacity="0.25"/>
<path d="M-124 281 C-121 275 -113 256 -106 245 C-99 233 -92 222 -84 211 C-76 201 -68 190 -59 180 C-50 170 -40 161 -31 152 C-21 143 -10 135 1 127 C12 120 29 110 35 106" stroke="#9cb8c6" stroke-width="3.0" opacity="0.23"/>
<path d="M-14 53 C-10 51 0 44 7 40 C15 36 22 32 29 29 C37 25 44 22 52 19 C60 16 67 13 75 10 C83 8 91 5 99 3 C107 1 119 -2 123 -3" stroke="#a8bcc8" stroke-width="2.9" opacity="0.26"/>
<path d="M-2 96 C8 91 36 74 55 65 C75 56 96 49 117 44 C138 39 159 35 181 33 C202 31 224 31 246 33 C267 35 289 38 310 44 C331 49 361 61 372 65" stroke="#2f6a86" stroke-width="3.8" opacity="0.42"/>
<path d="M-195 291 C-193 284 -185 262 -179 248 C-173 234 -166 220 -158 206 C-150 193 -142 180 -133 167 C-124 155 -114 143 -103 131 C-93 120 -82 109 -70 98 C-59 88 -40 74 -34 69" stroke="#5cb0cc" stroke-width="3.7" opacity="0.41"/>
<path d="M-183 263 C-180 256 -171 235 -164 221 C-157 208 -149 194 -140 182 C-132 169 -122 156 -112 145 C-102 133 -92 121 -81 111 C-69 100 -58 90 -45 81 C-33 71 -14 59 -7 55" stroke="#4f98b4" stroke-width="1.7" opacity="0.30"/>
<path d="M150 53 C152 53 160 52 165 51 C169 51 174 50 179 50 C184 49 189 49 194 49 C199 48 203 48 208 48 C213 48 218 48 223 48 C228 48 233 48 238 49 C242 49 247 49 252 50 C257 50 262 51 267 52 C272 52 276 53 281 54 C286 55 291 56 296 57 C301 58 306 59 310 60 C315 62 320 63 325 65 C330 66 335 68 340 69 C344 71 349 73 354 75 C359 77 364 79 369 81 C374 83 378 86 383 88 C388 90 393 93 398 96 C403 98 408 101 412 104 C417 107 422 110 427 114 C432 117 437 120 442 124 C447 128 451 131 456 136 C461 140 466 144 471 148 C476 153 481 157 485 162 C490 167 498 176 500 178" stroke="#3ab4d8" stroke-width="6" opacity="0.9"/>
<path d="M160 64 C162 64 169 63 174 62 C179 62 184 61 188 61 C193 61 198 60 202 60 C207 60 212 60 217 60 C221 60 226 60 231 60 C236 61 240 61 245 61 C250 62 254 62 259 63 C264 63 269 64 273 65 C278 66 283 66 288 67 C292 68 297 69 302 71 C306 72 311 73 316 74 C321 76 325 77 330 79 C335 80 339 82 344 84 C349 86 354 88 358 90 C363 92 368 94 372 96 C377 98 382 101 387 103 C391 106 396 108 401 111 C406 114 410 117 415 120 C420 123 424 126 429 130 C434 133 439 137 443 140 C448 144 453 148 458 152 C462 157 467 161 472 166 C476 170 481 175 486 180 C491 186 498 194 500 197" stroke="#2c8cb0" stroke-width="5" opacity="0.55"/>
</g>
<path d="M160 118 C167 119 185 120 200 122 C215 124 230 125 250 129 C270 133 296 138 318 144 C340 150 362 158 380 164 C398 170 412 174 425 182 C438 190 450 200 460 210 C470 220 478 232 488 245 C498 258 515 278 520 285 L520 520 L-20 520 L-20 330 C 30 230, 90 150, 160 118 Z" fill="url(#wwat)" filter="url(#wb2)"/>
<g filter="url(#wb2)" fill="none" stroke-linecap="round">
<path d="M94 204 C96 201 104 191 110 186 C116 180 122 175 128 170 C135 165 142 160 149 156 C155 152 163 148 170 145 C177 141 189 137 193 136" stroke="#2c98b4" stroke-width="4.2" opacity="0.32"/>
<path d="M90 410 C89 407 86 398 84 392 C82 386 80 379 79 373 C78 366 77 360 77 354 C76 347 76 340 76 334 C77 327 78 318 78 315" stroke="#78cce0" stroke-width="3.5" opacity="0.53"/>
<path d="M42 283 C45 276 51 255 57 242 C63 229 71 217 79 205 C88 194 98 183 108 173 C119 164 131 155 143 148 C155 140 175 132 182 129" stroke="#2c98b4" stroke-width="2.1" opacity="0.35"/>
<path d="M57 331 C57 328 58 319 58 314 C59 308 60 302 61 297 C63 291 64 286 66 280 C67 275 69 270 71 264 C73 259 77 251 78 249" stroke="#48b4cc" stroke-width="3.7" opacity="0.40"/>
<path d="M96 218 C98 215 104 208 108 203 C113 198 117 194 122 190 C127 185 132 181 137 177 C142 173 147 170 152 166 C158 163 166 159 169 157" stroke="#9ad4e2" stroke-width="1.5" opacity="0.40"/>
<path d="M85 284 C86 280 90 268 94 260 C98 253 102 246 106 239 C111 232 116 225 121 219 C127 212 133 207 139 201 C145 196 156 189 159 186" stroke="#9ad4e2" stroke-width="4.4" opacity="0.53"/>
<path d="M-39 348 C-39 339 -39 314 -36 297 C-34 281 -30 264 -25 248 C-20 232 -13 217 -5 202 C2 187 12 172 22 159 C32 146 50 128 55 122" stroke="#48b4cc" stroke-width="3.1" opacity="0.57"/>
<path d="M-23 265 C-20 256 -12 230 -4 214 C3 198 13 182 23 168 C34 153 46 140 59 127 C72 115 86 104 101 94 C116 84 141 73 149 69" stroke="#9ad4e2" stroke-width="2.9" opacity="0.37"/>
<path d="M41 339 C41 336 41 328 41 322 C42 316 43 311 43 305 C44 300 45 294 47 289 C48 283 50 278 51 273 C53 267 56 259 57 257" stroke="#9ad4e2" stroke-width="2.8" opacity="0.51"/>
<path d="M34 274 C35 270 39 258 42 251 C45 243 49 236 52 229 C56 221 61 214 65 207 C70 201 75 194 80 188 C85 182 94 173 97 170" stroke="#2c98b4" stroke-width="2.3" opacity="0.67"/>
<path d="M17 377 C16 374 15 365 15 359 C14 353 14 347 14 341 C14 335 14 329 14 323 C15 317 15 311 16 305 C17 299 19 290 20 287" stroke="#78cce0" stroke-width="3.3" opacity="0.55"/>
<path d="M55 356 C55 353 55 346 55 340 C55 335 55 330 55 325 C56 320 56 314 57 309 C58 304 59 299 60 294 C61 289 63 281 64 279" stroke="#2a88a6" stroke-width="3.7" opacity="0.32"/>
<path d="M-18 449 C-19 445 -23 434 -25 427 C-28 419 -30 411 -31 404 C-33 396 -34 388 -35 381 C-36 373 -37 365 -38 357 C-38 350 -38 338 -38 334" stroke="#78cce0" stroke-width="2.8" opacity="0.49"/>
<path d="M-10 219 C-7 213 2 195 9 184 C16 173 23 162 32 152 C40 142 49 132 59 123 C69 114 79 106 90 98 C100 91 118 81 123 78" stroke="#2c98b4" stroke-width="4.2" opacity="0.36"/>
<path d="M-8 220 C-4 214 6 193 14 180 C22 167 31 155 42 144 C52 132 63 122 75 112 C87 103 99 94 113 86 C126 79 147 70 154 66" stroke="#48b4cc" stroke-width="3.4" opacity="0.48"/>
<path d="M121 237 C124 234 131 225 137 219 C142 214 148 209 154 204 C160 199 166 195 173 191 C180 187 187 184 194 181 C201 178 212 174 216 173" stroke="#48b4cc" stroke-width="2.6" opacity="0.36"/>
<path d="M53 337 C54 332 54 316 56 306 C58 296 60 286 63 277 C66 267 70 257 75 248 C79 239 85 230 90 222 C96 214 106 202 110 198" stroke="#2c98b4" stroke-width="2.8" opacity="0.61"/>
<path d="M56 435 C54 428 45 409 42 395 C39 382 36 368 35 354 C35 340 35 326 37 312 C39 298 42 284 46 271 C50 258 60 239 62 233" stroke="#2c98b4" stroke-width="1.9" opacity="0.49"/>
<path d="M53 265 C55 260 60 247 64 238 C69 230 74 221 79 213 C85 205 91 198 98 191 C104 184 111 177 119 171 C126 165 138 156 142 154" stroke="#2a88a6" stroke-width="2.3" opacity="0.54"/>
<path d="M5 364 C5 360 4 348 4 340 C4 333 4 325 5 317 C6 309 7 301 8 293 C10 285 12 278 14 270 C16 262 20 251 21 247" stroke="#2a88a6" stroke-width="3.8" opacity="0.38"/>
<path d="M95 412 C94 407 87 392 85 381 C82 371 81 360 80 349 C80 338 80 327 82 316 C83 306 86 295 89 285 C92 274 100 260 102 255" stroke="#2c98b4" stroke-width="1.6" opacity="0.32"/>
<path d="M81 301 C82 296 85 283 89 275 C92 267 95 259 100 251 C104 243 109 236 114 229 C120 221 126 215 132 209 C139 202 149 194 153 191" stroke="#48b4cc" stroke-width="2.2" opacity="0.41"/>
<path d="M14 426 C13 423 9 412 7 404 C5 397 4 389 2 381 C1 374 0 366 -0 358 C-1 350 -1 342 -1 335 C-1 327 0 315 1 311" stroke="#78cce0" stroke-width="3.4" opacity="0.45"/>
<path d="M66 244 C68 241 73 230 78 223 C82 216 87 210 92 203 C97 197 103 191 108 185 C114 180 120 174 126 169 C133 165 143 158 146 156" stroke="#2c98b4" stroke-width="1.9" opacity="0.65"/>
<path d="M-3 289 C-1 282 4 259 9 245 C14 231 21 217 29 204 C36 191 45 178 55 167 C65 155 76 144 87 135 C99 125 118 113 125 108" stroke="#78cce0" stroke-width="2.8" opacity="0.60"/>
<path d="M85 238 C87 236 91 228 95 223 C98 218 102 213 106 209 C110 204 114 200 118 196 C122 192 127 188 131 184 C136 180 143 175 146 173" stroke="#3a6f8a" stroke-width="2.5" opacity="0.52"/>
<path d="M16 428 C15 423 9 408 7 398 C5 387 3 377 2 367 C1 356 0 345 1 335 C1 324 2 314 3 303 C5 293 9 278 10 272" stroke="#2a88a6" stroke-width="3.2" opacity="0.48"/>
<path d="M69 324 C69 321 71 309 72 301 C74 293 76 286 78 278 C81 271 84 264 87 257 C91 250 94 243 99 236 C103 230 110 220 113 217" stroke="#3a6f8a" stroke-width="3.0" opacity="0.57"/>
<path d="M75 374 C75 371 74 364 73 359 C73 354 72 349 72 344 C72 339 72 334 72 330 C73 325 73 320 74 315 C75 310 76 303 76 300" stroke="#78cce0" stroke-width="4.2" opacity="0.54"/>
<path d="M11 306 C13 299 16 279 20 266 C24 253 29 240 35 228 C41 216 48 204 56 193 C64 182 73 171 83 162 C93 152 109 140 114 135" stroke="#2a88a6" stroke-width="2.3" opacity="0.36"/>
<path d="M64 365 C64 361 63 350 63 342 C63 335 63 327 64 320 C65 312 66 305 67 297 C69 290 71 283 74 276 C76 268 81 258 82 255" stroke="#48b4cc" stroke-width="2.5" opacity="0.48"/>
<path d="M37 415 C36 409 30 392 28 380 C26 368 25 356 25 344 C25 332 25 320 27 308 C29 296 31 284 35 273 C38 261 45 245 48 239" stroke="#2a88a6" stroke-width="2.8" opacity="0.62"/>
<path d="M82 277 C83 274 87 263 91 257 C94 250 98 244 102 237 C106 231 110 225 115 219 C120 214 125 208 130 203 C136 198 144 191 147 189" stroke="#2c98b4" stroke-width="4.2" opacity="0.40"/>
<path d="M70 285 C71 281 75 270 78 263 C80 256 84 250 87 243 C91 237 95 230 100 224 C104 218 109 212 114 207 C119 201 127 193 130 191" stroke="#9ad4e2" stroke-width="3.3" opacity="0.62"/>
<path d="M12 269 C14 264 18 249 22 240 C26 231 30 222 35 213 C40 204 46 195 52 187 C58 179 64 171 71 164 C78 157 89 146 93 143" stroke="#78cce0" stroke-width="4.0" opacity="0.53"/>
<path d="M94 367 C94 362 92 347 92 338 C92 328 93 318 95 308 C97 298 100 288 103 279 C107 270 111 261 116 253 C121 244 131 233 134 229" stroke="#2a88a6" stroke-width="3.9" opacity="0.39"/>
<path d="M130 266 C132 264 136 257 139 253 C142 249 145 244 149 240 C152 237 156 233 160 229 C164 226 168 222 172 219 C176 216 183 212 185 211" stroke="#48b4cc" stroke-width="3.5" opacity="0.62"/>
<path d="M110 328 C111 324 112 312 114 304 C116 296 119 288 122 280 C126 273 129 265 134 258 C139 251 144 245 149 238 C155 232 165 224 168 222" stroke="#48b4cc" stroke-width="2.5" opacity="0.41"/>
<path d="M112 287 C113 286 115 280 116 277 C118 273 120 270 121 266 C123 263 125 260 127 257 C129 253 131 250 134 247 C136 244 140 240 141 238" stroke="#2c98b4" stroke-width="1.9" opacity="0.60"/>
<path d="M37 241 C39 237 44 226 48 220 C52 213 56 206 61 200 C65 193 70 187 75 181 C80 175 86 169 91 164 C97 159 106 151 109 148" stroke="#3a6f8a" stroke-width="2.5" opacity="0.48"/>
<path d="M179 392 C181 388 184 378 188 372 C191 365 195 359 200 353 C204 347 209 342 215 337 C220 332 226 327 232 323 C238 319 248 315 252 313" stroke="#2c9cb4" stroke-width="3.0" opacity="0.33"/>
<path d="M120 350 C125 342 139 315 151 301 C164 286 179 273 195 263 C212 253 230 245 249 240 C267 235 287 232 306 233 C326 234 354 242 364 244" stroke="#2590a8" stroke-width="3.5" opacity="0.45"/>
<path d="M256 311 C260 310 271 307 279 305 C286 304 294 304 302 304 C310 304 317 305 325 306 C332 308 340 310 347 313 C354 316 364 322 368 323" stroke="#6fd8e4" stroke-width="3.8" opacity="0.44"/>
<path d="M153 323 C158 318 173 300 184 290 C196 280 209 272 223 265 C237 259 252 254 267 251 C282 249 298 248 313 249 C328 250 350 256 358 258" stroke="#6fd8e4" stroke-width="2.8" opacity="0.31"/>
<path d="M219 397 C221 393 227 381 232 374 C238 367 245 361 253 356 C261 351 269 347 278 345 C287 343 296 342 305 342 C314 343 327 347 332 348" stroke="#2590a8" stroke-width="3.4" opacity="0.28"/>
<path d="M191 352 C193 349 200 341 205 335 C210 330 216 326 222 321 C227 317 234 313 240 310 C247 307 253 304 260 302 C267 300 278 298 281 297" stroke="#6fd8e4" stroke-width="2.9" opacity="0.38"/>
<path d="M241 328 C246 326 262 318 273 315 C285 313 297 312 308 313 C320 313 331 316 342 320 C353 324 363 330 373 337 C382 344 392 358 396 363" stroke="#6fd8e4" stroke-width="3.5" opacity="0.20"/>
<path d="M156 383 C158 379 162 367 166 360 C170 352 175 345 180 338 C185 331 191 325 197 319 C203 313 210 308 217 303 C225 298 236 293 240 291" stroke="#2c9cb4" stroke-width="2.4" opacity="0.25"/>
<path d="M204 388 C206 385 211 374 216 368 C221 361 226 355 232 350 C238 345 245 340 252 337 C259 333 267 330 275 328 C282 326 294 326 298 325" stroke="#2c9cb4" stroke-width="2.9" opacity="0.42"/>
<path d="M166 404 C168 398 173 378 180 366 C186 354 194 342 204 333 C214 324 225 315 237 309 C249 303 263 298 276 296 C289 293 310 295 317 295" stroke="#52c8d8" stroke-width="3.9" opacity="0.34"/>
<path d="M126 292 C131 287 145 271 155 262 C166 252 177 244 189 237 C202 230 214 225 228 220 C241 215 255 212 268 210 C282 208 303 208 310 208" stroke="#9ae6ee" stroke-width="3.3" opacity="0.39"/>
<path d="M225 411 C226 409 228 402 230 398 C232 393 234 389 237 385 C240 381 243 377 246 374 C250 371 254 368 258 365 C262 362 269 359 271 358" stroke="#2c9cb4" stroke-width="3.9" opacity="0.40"/>
<path d="M192 352 C195 349 204 337 211 331 C218 325 225 319 234 315 C242 310 251 306 259 303 C268 300 278 298 287 297 C296 297 311 298 315 298" stroke="#9ae6ee" stroke-width="3.6" opacity="0.21"/>
<path d="M70 381 C73 370 82 337 93 318 C104 298 118 279 133 263 C149 248 168 234 187 223 C207 212 229 204 251 200 C273 195 307 196 318 195" stroke="#9ae6ee" stroke-width="2.9" opacity="0.26"/>
<path d="M164 398 C165 394 169 381 172 373 C176 365 180 357 185 349 C191 342 196 335 203 329 C209 323 216 317 224 312 C231 308 244 302 248 300" stroke="#9ae6ee" stroke-width="2.3" opacity="0.43"/>
<path d="M198 242 C206 239 232 226 250 222 C267 218 286 216 305 216 C323 217 342 219 360 225 C377 230 395 237 410 247 C426 256 447 276 454 281" stroke="#52c8d8" stroke-width="2.5" opacity="0.33"/>
<path d="M217 400 C217 398 219 394 220 391 C222 388 223 386 225 383 C226 380 228 378 230 375 C232 373 234 371 236 368 C238 366 242 363 243 362" stroke="#2c9cb4" stroke-width="3.6" opacity="0.22"/>
<path d="M198 386 C199 384 202 377 204 373 C207 369 209 366 212 362 C215 358 218 355 221 351 C224 348 228 345 232 342 C235 339 241 336 243 334" stroke="#2590a8" stroke-width="3.4" opacity="0.22"/>
<path d="M134 315 C138 310 151 292 161 283 C172 273 183 264 195 257 C207 250 220 244 234 239 C247 234 261 231 275 229 C289 228 311 229 318 229" stroke="#6fd8e4" stroke-width="3.6" opacity="0.30"/>
<path d="M198 219 C208 216 238 203 259 199 C280 196 303 195 324 197 C345 199 367 205 387 213 C407 221 426 232 443 245 C460 258 481 284 489 291" stroke="#2c9cb4" stroke-width="2.1" opacity="0.30"/>
<path d="M148 407 C150 400 155 376 162 362 C169 349 178 335 189 324 C199 313 212 303 226 295 C239 288 255 282 270 279 C285 276 309 277 317 277" stroke="#9ae6ee" stroke-width="2.6" opacity="0.22"/>
<path d="M209 355 C213 351 223 340 231 334 C239 328 248 323 257 320 C267 316 277 314 286 313 C296 312 307 312 316 313 C326 314 340 320 345 321" stroke="#9ae6ee" stroke-width="2.1" opacity="0.24"/>
<path d="M132 348 C137 341 148 319 159 307 C170 295 182 284 195 275 C209 266 224 259 239 253 C254 248 271 245 287 244 C303 242 327 246 335 246" stroke="#6fd8e4" stroke-width="3.3" opacity="0.20"/>
<path d="M180 377 C181 374 186 365 189 359 C193 353 197 348 201 343 C206 338 211 333 216 329 C221 324 227 320 233 317 C238 313 248 309 251 308" stroke="#52c8d8" stroke-width="2.2" opacity="0.39"/>
<path d="M85 372 C89 363 97 336 107 320 C116 303 128 288 141 274 C154 261 169 249 185 239 C201 229 219 222 237 216 C255 211 284 209 293 207" stroke="#52c8d8" stroke-width="2.3" opacity="0.36"/>
<path d="M78 344 C84 333 99 300 114 281 C129 262 148 245 167 232 C187 219 210 208 233 202 C256 195 281 191 304 192 C328 192 364 202 376 204" stroke="#2590a8" stroke-width="3.1" opacity="0.22"/>
<path d="M233 362 C234 360 239 356 242 354 C245 351 249 349 252 347 C256 345 260 343 263 341 C267 340 271 339 275 338 C279 336 285 335 287 335" stroke="#9ae6ee" stroke-width="3.9" opacity="0.34"/>
<path d="M169 282 C177 277 198 260 215 252 C231 244 249 238 267 235 C284 232 303 232 321 234 C339 236 358 240 374 247 C391 254 414 270 422 274" stroke="#6fd8e4" stroke-width="2.2" opacity="0.36"/>
<path d="M226 389 C227 387 230 382 232 379 C235 375 237 372 240 370 C243 367 246 364 249 362 C253 359 256 357 260 355 C263 353 269 351 271 350" stroke="#2c9cb4" stroke-width="2.8" opacity="0.41"/>
<path d="M225 275 C229 273 241 268 249 265 C257 262 266 261 275 259 C283 258 292 257 301 257 C310 257 318 258 327 260 C336 261 348 265 353 266" stroke="#2c9cb4" stroke-width="4.0" opacity="0.31"/>
<path d="M161 277 C169 272 192 253 208 245 C225 237 244 230 263 227 C281 223 301 223 320 224 C338 226 358 231 375 238 C393 244 417 261 425 265" stroke="#52c8d8" stroke-width="2.3" opacity="0.25"/>
<path d="M220 393 C222 390 226 382 229 377 C233 372 237 368 242 364 C246 360 251 356 257 353 C262 350 267 348 273 346 C279 344 288 343 291 342" stroke="#2590a8" stroke-width="3.2" opacity="0.38"/>
<path d="M185 296 C192 292 211 277 225 270 C239 264 255 259 270 256 C286 253 302 253 318 254 C333 256 349 260 364 265 C378 271 398 285 405 288" stroke="#2c9cb4" stroke-width="3.3" opacity="0.35"/>
<path d="M258 382 C259 381 264 378 267 376 C270 374 273 372 277 371 C280 369 284 368 288 368 C291 367 295 367 299 366 C303 366 308 367 310 367" stroke="#2590a8" stroke-width="2.2" opacity="0.29"/>
<path d="M152 380 C155 373 163 353 171 341 C179 329 189 318 200 309 C211 300 224 292 237 286 C250 281 265 277 279 275 C293 273 315 275 323 275" stroke="#52c8d8" stroke-width="3.4" opacity="0.26"/>
</g>
<path d="M30 290 C 45 220, 70 175, 100 150 C 112 185, 122 225, 130 270 C 135 330, 130 420, 130 520 L 20 520 Z" fill="#1a3850" opacity="0.85" filter="url(#wb1)"/>
<path d="M52 186 C 56 200, 62 215, 72 232" stroke="#e8f2f6" stroke-width="4" fill="none" opacity="0.85" filter="url(#wb2)"/>
<g mask="url(#wskmask)"><path d="M160 90 C167 89 185 86 200 85 C215 84 230 83 250 84 C270 85 296 86 318 90 C340 94 362 101 380 108 C398 115 412 123 425 134 C438 145 447 158 455 172 C463 186 470 203 475 215 C480 227 486 240 488 245 L488.0 245.0 C483 239 470 220 460 210 C450 200 438 190 425 182 C412 174 398 170 380 164 C362 158 340 150 318 144 C296 138 270 133 250 129 C230 125 215 124 200 122 C185 120 167 119 160 118 Z" fill="url(#wsky)" filter="url(#wb2)"/></g>
<path d="M185.0 116.4 L193.6 117.2 L200.6 120.4 L207.7 115.9 L213.2 123.0 L220.7 124.5 L229.5 120.2 L234.3 126.7 L238.6 125.7 L242.8 123.8 L251.0 124.5 L257.5 124.7 L262.9 122.9 L271.1 127.3 L276.2 132.2 L284.0 132.9 L290.0 129.2 L294.0 136.8 L300.3 131.3 L304.7 135.4 L310.0 141.5 L318.9 137.5 L324.1 145.1 L332.1 146.9 L338.3 148.8 L343.0 146.3 L349.1 152.1 L357.9 149.6 L366.3 157.7 L374.6 156.5 L383.6 163.5 L391.4 165.6 L395.8 169.5 L401.0 167.0 L407.3 166.3 L414.1 169.9 L418.9 171.4 L424.2 180.0 L432.9 186.5 L441.3 189.6 L445.8 198.3 L451.0 196.5 L459.1 203.9 L464.0 208.5 L469.1 216.4 L476.2 227.7 L481.2 236.4 L487.4 243.8 L493.3 239.9 L499.1 237.0 L499.1 253.1 L493.3 251.1 L487.4 251.4 L481.2 244.8 L476.2 242.6 L469.1 234.7 L464.0 224.5 L459.1 220.9 L451.0 215.3 L445.8 217.2 L441.3 210.2 L432.9 209.3 L424.2 202.4 L418.9 201.8 L414.1 193.8 L407.3 194.0 L401.0 190.4 L395.8 190.3 L391.4 185.8 L383.6 182.3 L374.6 177.6 L366.3 177.8 L357.9 174.2 L349.1 171.0 L343.0 167.6 L338.3 172.0 L332.1 168.3 L324.1 160.9 L318.9 159.8 L310.0 159.8 L304.7 162.9 L300.3 158.3 L294.0 161.8 L290.0 160.4 L284.0 159.0 L276.2 149.9 L271.1 151.1 L262.9 155.8 L257.5 149.4 L251.0 149.8 L242.8 146.6 L238.6 144.1 L234.3 146.3 L229.5 146.4 L220.7 148.7 L213.2 146.0 L207.7 138.4 L200.6 141.4 L193.6 140.6 L185.0 140.3 Z" fill="#47596a" opacity="0.85" filter="url(#wb3)"/>
<ellipse cx="180" cy="100" rx="22" ry="18" fill="#e8eef2" opacity="0.9" filter="url(#wb1)"/>
<path d="M130 118 C 150 112, 180 118, 205 124 C 200 135, 170 140, 140 138 Z" fill="#2e4a5e" opacity="0.8" filter="url(#wb3)"/>
<path d="M163 252 C 180 226, 215 206, 258 197 C 238 212, 224 232, 214 252 Z" fill="#f0f7f8" filter="url(#wb2)"/>
<ellipse cx="151" cy="14" rx="34" ry="15" fill="url(#wgl)"/>
<g filter="url(#wb3)">
<path d="M128 8 C 140 2, 165 2, 176 10 C 178 40, 190 60, 200 84 C 180 90, 160 88, 150 80 C 140 55, 132 30, 128 8 Z" fill="#c8c4cc" opacity="0.35"/>
<ellipse cx="151" cy="14" rx="20" ry="9" fill="#fff6f0" opacity="0.95"/>
<ellipse cx="157" cy="38" rx="24" ry="6" fill="#efe2e0" opacity="0.75"/>
<ellipse cx="172" cy="66" rx="24" ry="7" fill="#e0e2e6" opacity="0.7"/>
</g>
</g>
</svg>
<div class="h2" style="top:210px">About</div>
<div class="a" style="left:1031px;top:249px;font-size:16px;line-height:24px;color:#1f2328;white-space:normal;width:297px">Large Action Model framework to<br>automate browser interaction</div>
<svg class="a" style="left:1031px;top:316.5px" width="16" height="16" viewBox="0 0 16 16"><path fill="#636c76" d="M0 1.75A.75.75 0 0 1 .75 1h4.253c1.227 0 2.317.59 3 1.501A3.743 3.743 0 0 1 11.006 1h4.245a.75.75 0 0 1 .75.75v10.5a.75.75 0 0 1-.75.75h-4.507a2.25 2.25 0 0 0-1.591.659l-.622.621a.75.75 0 0 1-1.060 0l-.622-.621A2.25 2.25 0 0 0 5.258 13H.75a.75.75 0 0 1-.75-.75Zm7.251 10.324.004-5.073-.002-2.253A2.25 2.25 0 0 0 5.003 2.5H1.5v9h3.757a3.75 3.75 0 0 1 1.994.574ZM8.755 4.75l-.004 7.322a3.752 3.752 0 0 1 1.992-.572H14.5v-9h-3.495a2.25 2.25 0 0 0-2.25 2.25Z"/></svg>
<div class="a t14" style="left:1059px;top:314px;line-height:21px;color:#636c76">Readme</div>
<svg class="a" style="left:1031px;top:344.5px" width="16" height="16" viewBox="0 0 16 16"><path fill="#636c76" d="M8.75.75V2h.985c.304 0 .603.08.867.231l1.29.736c.038.022.08.033.124.033h2.234a.75.75 0 0 1 0 1.5h-.427l2.111 4.692a.75.75 0 0 1-.154.838l-.53-.53.529.531-.001.002-.002.002-.006.006-.006.005-.01.01-.045.04c-.21.176-.441.327-.686.45C14.556 10.78 13.88 11 13 11a4.498 4.498 0 0 1-2.023-.454 3.544 3.544 0 0 1-.686-.45l-.045-.04-.016-.015-.006-.006-.004-.004v-.001a.75.75 0 0 1-.154-.838L12.178 4.5h-.162c-.305 0-.604-.079-.868-.231l-1.29-.736a.245.245 0 0 0-.124-.033H8.75V13h2.5a.75.75 0 0 1 0 1.5h-6.5a.75.75 0 0 1 0-1.5h2.5V3.5h-.984a.245.245 0 0 0-.124.033l-1.289.737c-.265.15-.564.23-.869.23h-.162l2.112 4.692a.75.75 0 0 1-.154.838l-.53-.53.529.531-.001.002-.002.002-.006.006-.016.015-.045.04c-.21.176-.441.327-.686.45C4.556 10.78 3.88 11 3 11a4.498 4.498 0 0 1-2.023-.454 3.544 3.544 0 0 1-.686-.45l-.045-.04-.016-.015-.006-.006-.004-.004v-.001a.75.75 0 0 1-.154-.838L2.178 4.5H1.75a.75.75 0 0 1 0-1.5h2.234a.249.249 0 0 0 .125-.033l1.288-.737c.265-.15.564-.23.869-.23h.984V.75a.75.75 0 0 1 1.5 0Zm2.945 8.477c.285.135.718.273 1.305.273s1.020-.138 1.305-.273L13 6.327Zm-10 0c.285.135.718.273 1.305.273s1.02-.138 1.305-.273L3 6.327Z"/></svg>
<div class="a t14" style="left:1059px;top:342px;line-height:21px;color:#636c76">Apache-2.0 license</div>
<svg class="a" style="left:1031px;top:372.5px" width="16" height="16" viewBox="0 0 16 16"><path fill="#636c76" d="M6 2c.306 0 .582.187.696.471L10 10.731l1.304-3.26A.751.751 0 0 1 12 7h3.25a.75.75 0 0 1 0 1.5h-2.742l-1.812 4.528a.751.751 0 0 1-1.392 0L6 4.77 4.696 8.03A.75.75 0 0 1 4 8.5H.75a.75.75 0 0 1 0-1.5h2.742l1.812-4.529A.751.751 0 0 1 6 2Z"/></svg>
<div class="a t14" style="left:1059px;top:370px;line-height:21px;color:#636c76">Activity</div>
<svg class="a" style="left:1031px;top:401.5px" width="16" height="16" viewBox="0 0 16 16"><path fill="#636c76" d="M0 3.75C0 2.784.784 2 1.75 2h12.5c.966 0 1.75.784 1.75 1.75v8.5A1.75 1.75 0 0 1 14.25 14H1.75A1.75 1.75 0 0 1 0 12.25Zm1.75-.25a.25.25 0 0 0-.25.25v8.5c0 .138.112.25.25.25h12.5a.25.25 0 0 0 .25-.25v-8.5a.25.25 0 0 0-.25-.25ZM3.5 6.25a.75.75 0 0 1 .75-.75h7a.75.75 0 0 1 0 1.5h-7a.75.75 0 0 1-.75-.75Zm.75 2.25h4a.75.75 0 0 1 0 1.5h-4a.75.75 0 0 1 0-1.5Z"/></svg>
<div class="a t14" style="left:1059px;top:399px;line-height:21px;color:#636c76">Custom properties</div>
<svg class="a" style="left:1031px;top:430.5px" width="16" height="16" viewBox="0 0 16 16"><path fill="#636c76" d="M8 .25a.75.75 0 0 1 .673.418l1.882 3.815 4.21.612a.75.75 0 0 1 .416 1.279l-3.046 2.97.719 4.192a.751.751 0 0 1-1.088.791L8 12.347l-3.766 1.98a.75.75 0 0 1-1.088-.79l.72-4.194L.818 6.374a.75.75 0 0 1 .416-1.28l4.21-.611L7.327.668A.75.75 0 0 1 8 .25Zm0 2.445L6.615 5.5a.75.75 0 0 1-.564.41l-3.097.45 2.240 2.184a.75.75 0 0 1 .216.664l-.528 3.084 2.769-1.456a.75.75 0 0 1 .698 0l2.77 1.456-.53-3.084a.75.75 0 0 1 .216-.664l2.24-2.183-3.096-.45a.75.75 0 0 1-.564-.41L8 2.694Z"/></svg>
<div class="a t14" style="left:1059px;top:428px;line-height:21px;color:#636c76"><b style="color:#1f2328;color:#636c76">346</b> stars</div>
<svg class="a" style="left:1031px;top:460.5px" width="16" height="16" viewBox="0 0 16 16"><path fill="#636c76" d="M8 2c1.981 0 3.671.992 4.933 2.078 1.27 1.091 2.187 2.345 2.637 3.023a1.62 1.62 0 0 1 0 1.798c-.45.678-1.367 1.932-2.637 3.023C11.67 13.008 9.981 14 8 14c-1.981 0-3.671-.992-4.933-2.078C1.797 10.83.88 9.576.43 8.898a1.62 1.62 0 0 1 0-1.798c.45-.677 1.367-1.931 2.637-3.022C4.33 2.992 6.019 2 8 2ZM1.679 7.932a.12.12 0 0 0 0 .136c.411.622 1.241 1.75 2.366 2.717C5.176 11.758 6.527 12.5 8 12.5c1.473 0 2.825-.742 3.955-1.715 1.124-.967 1.954-2.096 2.366-2.717a.12.12 0 0 0 0-.136c-.412-.621-1.242-1.75-2.366-2.717C10.824 4.242 9.473 3.5 8 3.5c-1.473 0-2.825.742-3.955 1.715-1.124.967-1.954 2.096-2.366 2.717ZM8 10a2 2 0 1 1-.001-3.999A2 2 0 0 1 8 10Z"/></svg>
<div class="a t14" style="left:1059px;top:458px;line-height:21px;color:#636c76"><b>4</b> watching</div>
<svg class="a" style="left:1031px;top:488.5px" width="16" height="16" viewBox="0 0 16 16"><path fill="#636c76" d="M5 5.372v.878c0 .414.336.75.75.75h4.5a.75.75 0 0 0 .75-.75v-.878a2.25 2.25 0 1 1 1.5 0v.878a2.25 2.25 0 0 1-2.25 2.250h-1.5v2.128a2.251 2.251 0 1 1-1.5 0V8.5h-1.5A2.25 2.25 0 0 1 3.5 6.25v-.878a2.25 2.25 0 1 1 1.5 0ZM5 3.25a.75.75 0 1 0-1.5 0 .75.75 0 0 0 1.5 0Zm6.75.75a.75.75 0 1 0 0-1.5.75.75 0 0 0 0 1.5Zm-3 8.75a.75.75 0 1 0-1.5 0 .75.75 0 0 0 1.5 0Z"/></svg>
<div class="a t14" style="left:1059px;top:486px;line-height:21px;color:#636c76"><b>40</b> forks</div>
<div class="a t14" style="left:1032px;top:516px;line-height:21px;color:#636c76">Report repository</div>
<div class="div" style="top:553px"></div>
<div class="h2" style="top:571px">Releases</div>
<div class="a" style="left:1031px;top:611px;font-size:12px;line-height:18px;color:#636c76">No releases published</div>
<div class="div" style="top:643px"></div>
<div class="h2" style="top:661px">Packages</div>
<div class="a" style="left:1031px;top:701px;font-size:12px;line-height:18px;color:#636c76">No packages published</div>
<div class="div" style="top:735px"></div>
<div class="h2" style="top:753px">Languages</div>
<div class="a" style="left:1031px;top:792px;width:297px;height:8px;border-radius:6px;background:#da5b0b"></div>
<div class="a" style="left:1038px;top:813px;width:8px;height:8px;border-radius:50%;background:#da5b0b"></div>
<div class="a" style="left:1056px;top:807px;font-size:12px;line-height:18px;font-weight:bold">Jupyter Notebook <span style="font-weight:normal;color:#636c76">100.0%</span></div>
</div>
<div id="wm">AiJuh.com</div><div id="wm2">AiJuh.com</div>
</body></html>
